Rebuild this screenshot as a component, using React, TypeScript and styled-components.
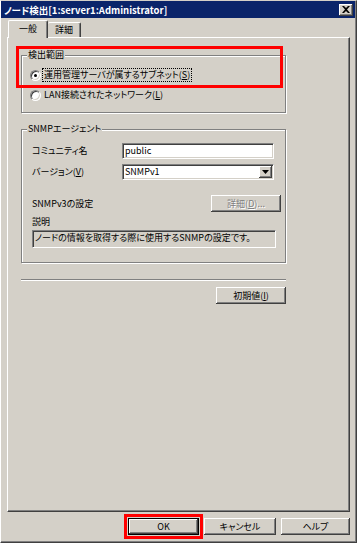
import React from 'react';
import styled, { createGlobalStyle } from 'styled-components';

const GlobalStyle = createGlobalStyle`
  html, body {
    margin: 0;
    padding: 0;
    background: #d4d0c8;
  }
  body {
    font-family: "Noto Sans CJK JP", "Liberation Sans", sans-serif;
    font-size: 9px;
    font-feature-settings: "palt" 1;
    color: #000;
  }
  * {
    box-sizing: border-box;
  }
`;

const raised = `
  background: #d4d0c8;
  border: none;
  box-shadow: inset -1px -1px 0 #404040, inset 1px 1px 0 #ffffff,
    inset -2px -2px 0 #808080, inset 2px 2px 0 #d4d0c8;
`;

const sunken = `
  border: 1px solid;
  border-color: #808080 #ffffff #ffffff #808080;
  box-shadow: inset 1px 1px 0 #404040, inset -1px -1px 0 #d4d0c8;
`;

const Window = styled.div`
  width: 357px;
  height: 543px;
  display: flex;
  flex-direction: column;
  background: #d4d0c8;
  border-top: 1px solid #d4d0c8;
  border-left: 1px solid #ffffff;
  border-right: 1px solid #404040;
  border-bottom: 1px solid #404040;
  box-shadow: inset -1px -1px 0 #808080;
`;

const TitleBar = styled.div`
  height: 17px;
  margin-right: 1px;
  padding: 0 2px 0 3px;
  background: #0a246a;
  color: #ffffff;
  font-weight: bold;
  font-size: 9.5px;
  display: flex;
  align-items: center;
  justify-content: space-between;
`;

const CloseButton = styled.div`
  ${raised}
  width: 14px;
  height: 12px;
  display: flex;
  align-items: center;
  justify-content: center;
`;

const Content = styled.div`
  flex: 1;
  display: flex;
  flex-direction: column;
  padding: 2px 6px 0 6px;
`;

const TabRow = styled.div`
  display: flex;
  align-items: flex-end;
  height: 17px;
  padding-left: 1px;
  position: relative;
  z-index: 1;
`;

const Tab = styled.div<{ $active?: boolean }>`
  height: ${p => (p.$active ? 18 : 15)}px;
  margin-bottom: ${p => (p.$active ? -1 : 0)}px;
  padding: ${p => (p.$active ? '0 10px' : '0 7px')};
  background: #d4d0c8;
  border-top: 1px solid #ffffff;
  border-left: ${p => (p.$active ? '1px solid #ffffff' : 'none')};
  border-right: 1px solid #404040;
  box-shadow: inset -1px 0 0 #808080;
  border-radius: 2px 2px 0 0;
  display: flex;
  align-items: ${p => (p.$active ? 'flex-start' : 'center')};
  padding-top: ${p => (p.$active ? '2px' : '0')};
  line-height: 12px;
`;

const Panel = styled.div`
  flex: 1;
  position: relative;
  border: 1px solid;
  border-color: #ffffff #404040 #404040 #ffffff;
  box-shadow: inset -1px -1px 0 #808080;
  padding: 11px 0 0 13px;
`;

const Highlight = styled.div`
  position: absolute;
  left: 8px;
  top: 8px;
  width: 267px;
  height: 42px;
  border: 3px solid #ff0000;
  pointer-events: none;
`;

const Column = styled.div`
  width: 265px;
  display: flex;
  flex-direction: column;
`;

const Group = styled.fieldset<{ $gap?: number }>`
  margin: 0 0 ${p => p.$gap ?? 0}px 0;
  padding: 0;
  min-width: 0;
  border: 1px solid #808080;
  box-shadow: inset 1px 1px 0 #ffffff, 1px 1px 0 #ffffff;
`;

const Legend = styled.legend`
  margin-left: 5px;
  padding: 0 1px;
  line-height: 12px;
  background: #d4d0c8;
`;

const GroupBody = styled.div<{ $pad: string }>`
  padding: ${p => p.$pad};
  display: flex;
  flex-direction: column;
`;

const RadioRow = styled.label<{ $top: number }>`
  display: flex;
  align-items: center;
  height: 14px;
  margin-top: ${p => p.$top}px;
  gap: 2px;
`;

const RadioDot = styled.span<{ $on?: boolean }>`
  width: 11px;
  height: 11px;
  border-radius: 50%;
  background: #ffffff;
  border: 1px solid;
  border-color: #808080 #ffffff #ffffff #808080;
  box-shadow: inset 1px 1px 0 #404040, inset -1px -1px 0 #d4d0c8;
  display: flex;
  align-items: center;
  justify-content: center;
  &::after {
    content: '';
    width: 3px;
    height: 3px;
    border-radius: 50%;
    background: ${p => (p.$on ? '#000' : 'transparent')};
  }
`;

const RadioText = styled.span<{ $focus?: boolean }>`
  padding: 0 1px;
  line-height: 12px;
  outline: ${p => (p.$focus ? '1px dotted #000' : 'none')};
`;

const FieldRow = styled.div<{ $top: number; $spread?: boolean }>`
  display: flex;
  align-items: center;
  justify-content: ${p => (p.$spread ? 'space-between' : 'flex-start')};
  margin-top: ${p => p.$top}px;
`;

const Label = styled.span`
  width: 90px;
  line-height: 12px;
`;

const TextBox = styled.div`
  ${sunken}
  width: 152px;
  height: 16px;
  background: #ffffff;
  padding: 0 2px;
  line-height: 13px;
`;

const SelectBox = styled.div`
  ${sunken}
  width: 152px;
  height: 16px;
  background: #ffffff;
  display: flex;
  align-items: stretch;
  padding: 1px;
`;

const SelectText = styled.span`
  flex: 1;
  padding: 0 1px;
  line-height: 12px;
`;

const DropButton = styled.span`
  ${raised}
  width: 13px;
  display: flex;
  align-items: center;
  justify-content: center;
`;

const Button = styled.button<{ $w: number; $h?: number; $disabled?: boolean }>`
  ${raised}
  width: ${p => p.$w}px;
  height: ${p => p.$h ?? 17}px;
  padding: 0;
  font: inherit;
  font-feature-settings: "palt" 1;
  line-height: 12px;
  color: ${p => (p.$disabled ? '#808080' : '#000')};
  text-shadow: ${p => (p.$disabled ? '1px 1px 0 #ffffff' : 'none')};
`;

const DefaultButton = styled(Button)`
  border: 1px solid #000000;
  outline: 3px solid #ff0000;
  outline-offset: 1px;
`;

const DescLabel = styled.div`
  margin-top: 4px;
  line-height: 12px;
`;

const DescBox = styled.div`
  ${sunken}
  margin-top: 2px;
  width: 244px;
  height: 18px;
  padding: 1px 2px;
  line-height: 12px;
  white-space: nowrap;
  overflow: hidden;
`;

const Separator = styled.div`
  margin-top: 16px;
  height: 2px;
  border-top: 1px solid #808080;
  border-bottom: 1px solid #ffffff;
`;

const ResetRow = styled.div`
  margin-top: 6px;
  display: flex;
  justify-content: flex-end;
`;

const Footer = styled.div`
  height: 30px;
  display: flex;
  justify-content: flex-end;
  align-items: flex-start;
  padding-top: 6px;
  gap: 5px;
`;

const Key = ({ k }: { k: string }) => (
  <>
    (<u>{k}</u>)
  </>
);

export default function App() {
  return (
    <>
      <GlobalStyle />
      <Window>
        <TitleBar>
          <span>ノード検出[1:server1:Administrator]</span>
          <CloseButton>
            <svg width="8" height="7" viewBox="0 0 8 7">
              <path d="M0 0h2l2 2 2-2h2L5 3.5 8 7H6L4 5 2 7H0l3-3.5z" fill="#000" />
            </svg>
          </CloseButton>
        </TitleBar>
        <Content>
          <TabRow>
            <Tab $active>一般</Tab>
            <Tab>詳細</Tab>
          </TabRow>
          <Panel>
            <Column>
              <Group $gap={10}>
                <Legend>検出範囲</Legend>
                <GroupBody $pad="0 0 10px 8px">
                  <RadioRow $top={7}>
                    <RadioDot $on />
                    <RadioText $focus>
                      運用管理サーバが属するサブネット<Key k="S" />
                    </RadioText>
                  </RadioRow>
                  <RadioRow $top={6}>
                    <RadioDot />
                    <RadioText>
                      LAN接続されたネットワーク<Key k="L" />
                    </RadioText>
                  </RadioRow>
                </GroupBody>
              </Group>
              <Group>
                <Legend>SNMPエージェント</Legend>
                <GroupBody $pad="8px 4px 14px 10px">
                  <FieldRow $top={0}>
                    <Label>コミュニティ名</Label>
                    <TextBox>public</TextBox>
                  </FieldRow>
                  <FieldRow $top={5}>
                    <Label>
                      バージョン<Key k="V" />
                    </Label>
                    <SelectBox>
                      <SelectText>SNMPv1</SelectText>
                      <DropButton>
                        <svg width="7" height="4" viewBox="0 0 7 4">
                          <path d="M0 0h7L3.5 4z" fill="#000" />
                        </svg>
                      </DropButton>
                    </SelectBox>
                  </FieldRow>
                  <FieldRow $top={15} $spread>
                    <Label>SNMPv3の設定</Label>
                    <Button $w={70} $disabled>
                      詳細<Key k="D" />...
                    </Button>
                  </FieldRow>
                  <DescLabel>説明</DescLabel>
                  <DescBox>ノードの情報を取得する際に使用するSNMPの設定です。</DescBox>
                </GroupBody>
              </Group>
              <Separator />
              <ResetRow>
                <Button $w={70}>
                  初期値<Key k="I" />
                </Button>
              </ResetRow>
            </Column>
            <Highlight />
          </Panel>
          <Footer>
            <DefaultButton $w={71}>OK</DefaultButton>
            <Button $w={72}>キャンセル</Button>
            <Button $w={69}>ヘルプ</Button>
          </Footer>
        </Content>
      </Window>
    </>
  );
}
